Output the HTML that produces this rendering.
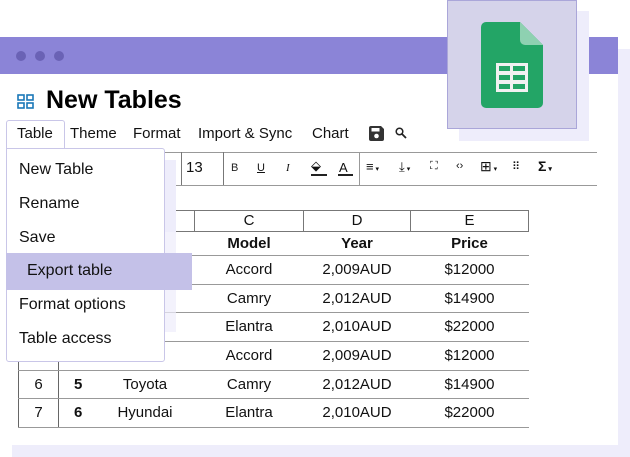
<!DOCTYPE html>
<html><head><meta charset="utf-8"><style>
*{margin:0;padding:0;box-sizing:border-box}
body{width:630px;height:457px;background:#fff;position:relative;overflow:hidden;font-family:"Liberation Sans",Arial,sans-serif;color:#111}
.a{position:absolute}
.t{position:absolute;white-space:nowrap}
.tbl td{border-bottom:1px solid #999;text-align:center;font-size:15px;padding:0;line-height:16px}
.tbl tr.h td{height:21px}
.tbl tr.m td{height:24px}
.tbl tr.r td{height:29px}
.tbl tr.s td{height:28px}
.tbl td.n{border-left:1px solid #666;border-right:1px solid #666}
</style></head><body>
<div class="a" style="left:12px;top:49px;width:618px;height:408px;background:#eeedfb"></div>
<div class="a" style="left:0;top:37px;width:618px;height:408px;background:#fff"></div>
<div class="a" style="left:0;top:37px;width:618px;height:37px;background:#8b84d7"></div>
<div class="a" style="left:16px;top:51px;width:10px;height:10px;border-radius:50%;background:#6a62b5"></div>
<div class="a" style="left:35px;top:51px;width:10px;height:10px;border-radius:50%;background:#6a62b5"></div>
<div class="a" style="left:54px;top:51px;width:10px;height:10px;border-radius:50%;background:#6a62b5"></div>
<div class="a" style="left:459px;top:11px;width:130px;height:130px;background:#eeedfb"></div>
<div class="a" style="left:447px;top:0;width:130px;height:129px;background:#d5d3ea;border:1px solid #aaa6d9"></div>
<svg class="a" style="left:481px;top:22px" width="62" height="86" viewBox="0 0 62 86"><path d="M5 0H39L62 23V81a5 5 0 0 1-5 5H5a5 5 0 0 1-5-5V5a5 5 0 0 1 5-5z" fill="#23a566"/><path d="M39 0L62 23H44a5 5 0 0 1-5-5z" fill="#8ed1b1"/><rect x="15" y="41" width="32" height="29" fill="#f1f1f1"/><g fill="#23a566"><rect x="18" y="44" width="11" height="5"/><rect x="32" y="44" width="12" height="5"/><rect x="18" y="53" width="11" height="5"/><rect x="32" y="53" width="12" height="5"/><rect x="18" y="62" width="11" height="5"/><rect x="32" y="62" width="12" height="5"/></g></svg>
<svg class="a" style="left:17px;top:94px" width="17" height="15" viewBox="0 0 17 15"><g fill="none" stroke="#1a78b8" stroke-width="1.6"><rect x="1" y="1" width="6" height="5"/><rect x="10" y="1" width="6" height="5"/><rect x="1" y="9" width="6" height="5"/><rect x="10" y="9" width="6" height="5"/></g></svg>
<div class="t" style="left:46px;top:86px;font-size:25px;font-weight:bold;color:#000">New Tables</div>
<div class="a" style="left:6px;top:120px;width:59px;height:32px;border:1px solid #c9c6e8;border-bottom:none;border-radius:3px 3px 0 0;background:#fff;z-index:3"></div>
<div class="t" style="left:17px;top:125px;font-size:15px;z-index:4">Table</div>
<div class="t" style="left:70px;top:125px;font-size:15px">Theme</div>
<div class="t" style="left:133px;top:125px;font-size:15px">Format</div>
<div class="t" style="left:198px;top:125px;font-size:15px">Import &amp; Sync</div>
<div class="t" style="left:312px;top:125px;font-size:15px">Chart</div>
<svg class="a" style="left:369px;top:126px" width="15" height="15" viewBox="0 0 15 15"><path d="M0 2a2 2 0 0 1 2-2h10l3 3v10a2 2 0 0 1-2 2H2a2 2 0 0 1-2-2z" fill="#333"/><rect x="2.5" y="2" width="8" height="3.5" fill="#fff"/><circle cx="7.5" cy="10" r="2.3" fill="#fff"/></svg>
<svg class="a" style="left:395px;top:127px" width="12" height="12" viewBox="0 0 12 12"><circle cx="4.5" cy="4.5" r="3.3" fill="none" stroke="#222" stroke-width="1.5"/><path d="M7 7l4 4" stroke="#222" stroke-width="1.8"/></svg>
<div class="a" style="left:160px;top:152px;width:437px;height:1px;background:#999"></div>
<div class="a" style="left:160px;top:185px;width:437px;height:1px;background:#999"></div>
<div class="a" style="left:181px;top:152px;width:1px;height:33px;background:#777"></div>
<div class="a" style="left:223px;top:152px;width:1px;height:33px;background:#777"></div>
<div class="a" style="left:359px;top:152px;width:1px;height:33px;background:#999"></div>
<div class="t" style="left:165px;top:159px;font-size:10px;color:#444">⌄</div>
<div class="t" style="left:186px;top:159px;font-size:15px">13</div>
<div class="t" style="left:231px;top:162px;font-size:11px;color:#222">B</div>
<div class="t" style="left:257px;top:162px;font-size:11px;text-decoration:underline">U</div>
<div class="t" style="left:286px;top:162px;font-size:11px;font-style:italic;font-family:'Liberation Serif',serif">I</div>
<div class="t" style="left:311px;top:158px;font-size:13px">⬙</div>
<div class="a" style="left:311px;top:174px;width:16px;height:2px;background:#222"></div>
<div class="t" style="left:339px;top:160px;font-size:13px">A</div>
<div class="a" style="left:338px;top:174px;width:15px;height:2px;background:#222"></div>
<div class="t" style="left:366px;top:159px;font-size:13px">≡<span style="font-size:7px"> ▾</span></div>
<div class="t" style="left:399px;top:159px;font-size:13px">⤓<span style="font-size:7px"> ▾</span></div>
<div class="t" style="left:430px;top:160px;font-size:11px">⛶</div>
<div class="t" style="left:456px;top:160px;font-size:11px">‹›</div>
<div class="t" style="left:480px;top:158px;font-size:14px">⊞<span style="font-size:7px"> ▾</span></div>
<div class="t" style="left:512px;top:160px;font-size:11px">⠿</div>
<div class="t" style="left:538px;top:158px;font-size:14px;font-weight:bold">Σ<span style="font-size:7px"> ▾</span></div>
<table class="tbl a" style="left:18px;top:210px;border-collapse:collapse;width:511px">
<tr class="h"><td style="width:40px;border:none"></td><td style="width:37px;border:none"></td><td style="width:99px;border:1px solid #777"></td><td style="width:109px;border:1px solid #777">C</td><td style="width:107px;border:1px solid #777">D</td><td style="border:1px solid #777">E</td></tr>
<tr class="m" style="font-weight:bold"><td class="n"></td><td></td><td>e</td><td>Model</td><td>Year</td><td>Price</td></tr>
<tr class="r"><td class="n"></td><td></td><td></td><td>Accord</td><td>2,009AUD</td><td>$12000</td></tr>
<tr class="s"><td class="n"></td><td></td><td>a</td><td>Camry</td><td>2,012AUD</td><td>$14900</td></tr>
<tr class="r"><td class="n"></td><td></td><td>ai</td><td>Elantra</td><td>2,010AUD</td><td>$22000</td></tr>
<tr class="r"><td class="n"></td><td></td><td>a</td><td>Accord</td><td>2,009AUD</td><td>$12000</td></tr>
<tr class="s"><td class="n">6</td><td style="font-weight:bold;text-align:left;padding-left:15px">5</td><td>Toyota</td><td>Camry</td><td>2,012AUD</td><td>$14900</td></tr>
<tr class="r"><td class="n">7</td><td style="font-weight:bold;text-align:left;padding-left:15px">6</td><td>Hyundai</td><td>Elantra</td><td>2,010AUD</td><td>$22000</td></tr>
</table>
<div class="a" style="left:16px;top:160px;width:160px;height:72px;background:#eeedfb;z-index:4"></div>
<div class="a" style="left:16px;top:232px;width:160px;height:100px;background:#eeedfb;z-index:4;opacity:.7"></div>
<div class="a" style="left:6px;top:148px;width:159px;height:214px;background:#fff;border:1px solid #c9c6e8;border-radius:0 3px 3px 3px;z-index:5"></div>
<div class="a" style="left:6px;top:253px;width:186px;height:37px;background:#c4c1e8;z-index:6"></div>
<div class="t" style="left:19px;top:161px;font-size:16px;z-index:7">New Table</div>
<div class="t" style="left:19px;top:195px;font-size:16px;z-index:7">Rename</div>
<div class="t" style="left:19px;top:229px;font-size:16px;z-index:7">Save</div>
<div class="t" style="left:27px;top:262px;font-size:16px;z-index:7">Export table</div>
<div class="t" style="left:19px;top:296px;font-size:16px;z-index:7">Format options</div>
<div class="t" style="left:19px;top:330px;font-size:16px;z-index:7">Table access</div>
</body></html>
